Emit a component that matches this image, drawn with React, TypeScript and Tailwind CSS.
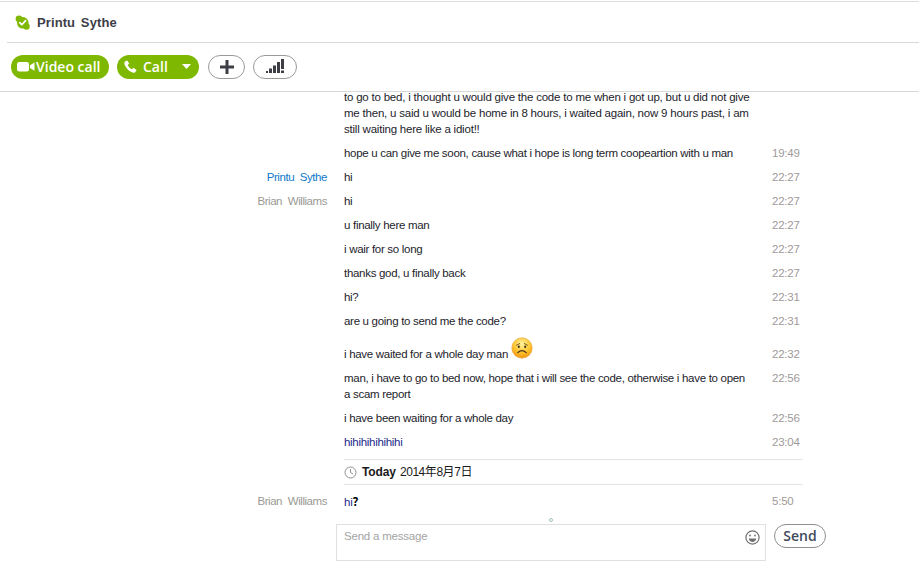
import React from "react";

type Row = { sender?: string; senderBlue?: boolean; lines: React.ReactNode; time?: string };

const rows: Row[] = [
  { lines: <>hope u can give me soon, cause what i hope is long term coopeartion with u man</>, time: "19:49" },
  { sender: "Printu Sythe", senderBlue: true, lines: "hi", time: "22:27" },
  { sender: "Brian Williams", lines: "hi", time: "22:27" },
  { lines: "u finally here man", time: "22:27" },
  { lines: "i wair for so long", time: "22:27" },
  { lines: "thanks god, u finally back", time: "22:27" },
  { lines: "hi?", time: "22:31" },
  { lines: "are u going to send me the code?", time: "22:31" },
];

const rows2: Row[] = [
  { lines: <>man, i have to go to bed now, hope that i will see the code, otherwise i have to open<br />a scam report</>, time: "22:56" },
  { lines: "i have been waiting for a whole day", time: "22:56" },
  { lines: <span className="text-[#1c2a8c]">hihihihihihihi</span>, time: "23:04" },
];

function Msg({ sender, senderBlue, lines, time }: Row) {
  return (
    <div className="flex py-1 leading-4 whitespace-nowrap">
      <div className={`w-[328px] shrink-0 text-right pr-px tracking-[-0.45px] [word-spacing:3px] ${senderBlue ? "text-[#0f78c8]" : "text-[#9a9a94]"}`}>{sender}</div>
      <div className="ml-4 w-[428px] shrink-0 text-[#1d1d2b] tracking-[-0.3px]">{lines}</div>
      <div className="text-[#a09a9a]">{time}</div>
    </div>
  );
}

function SadFace() {
  return (
    <svg width="22" height="22" viewBox="0 0 22 22" className="inline-block ml-[3px] align-[-1px]">
      <defs>
        <radialGradient id="sad" cx="50%" cy="30%" r="75%">
          <stop offset="0%" stopColor="#fff3a0" />
          <stop offset="55%" stopColor="#fdc52e" />
          <stop offset="100%" stopColor="#f28a0c" />
        </radialGradient>
      </defs>
      <circle cx="11" cy="11" r="10.2" fill="url(#sad)" stroke="#e8a23a" strokeWidth="0.6" />
      <path d="M5.500 8.200 L8.600 6.600 M16.500 8.200 L13.400 6.600" stroke="#6b4a1c" strokeWidth="0.9" fill="none" strokeLinecap="round" />
      <ellipse cx="7.800" cy="9.800" rx="1" ry="1.300" fill="#3c2c14" />
      <ellipse cx="14.200" cy="9.800" rx="1" ry="1.300" fill="#3c2c14" />
      <path d="M6.800 15.600 Q11 11.600 15.200 15.600" stroke="#4b3516" strokeWidth="1.300" fill="none" strokeLinecap="round" />
    </svg>
  );
}

export default function App() {
  return (
    <div className="w-[919px] h-[566px] overflow-hidden bg-white text-[11.5px] font-['Liberation_Sans',sans-serif] tracking-[-0.21px] flex flex-col">
      <div className="h-px mt-px bg-[#dcdcdc] shrink-0" />
      <div className="ml-[7px] h-[41px] shrink-0 border-b border-[#d8d8d8] flex items-center pl-2">
        <svg width="15" height="15" viewBox="0 0 15 15">
          <circle cx="7.800" cy="7.800" r="5.800" fill="#7fb800" />
          <circle cx="4" cy="3.800" r="3.400" fill="#7fb800" />
          <circle cx="11.500" cy="11.500" r="3.200" fill="#7fb800" />
          <path d="M4.800 7.600 6.800 9.800 10.600 5.600" stroke="#fff" strokeWidth="1.700" fill="none" strokeLinecap="round" strokeLinejoin="round" />
        </svg>
        <span className="ml-[7px] pt-px text-[13px] font-bold text-[#3d3d48] tracking-[0.1px] [word-spacing:2px]">Printu Sythe</span>
      </div>
      <div className="h-[49px] shrink-0 border-b border-[#d8d8d8] flex items-center pl-[11px] pb-px tracking-normal">
        <div className="w-[98px] h-6 rounded-full bg-[#7fb800] flex items-center pl-[6px] text-white font-['Open_Sans',sans-serif] font-semibold text-[14px] whitespace-nowrap">
          <svg width="18" height="11" viewBox="0 0 18 11" fill="#fff">
            <rect x="0" y="1" width="12" height="9.500" rx="2.200" />
            <path d="M13 4.200 17.500 1.400V9.800L13 7Z" />
          </svg>
          <span className="ml-[1px]">Video call</span>
        </div>
        <div className="ml-2 w-[82px] h-6 rounded-full bg-[#7fb800] flex items-center pl-[7px] text-white font-['Open_Sans',sans-serif] font-semibold text-[14px]">
          <svg width="13" height="13" viewBox="0 0 13 13" fill="#fff">
            <path d="M1 1.600 3.200.4 5.200 3.600 3.800 5C4.400 6.600 6 8.400 8 9.200L9.400 7.800 12.600 10 11.200 12.200C10.400 13 8.800 12.800 7.200 12 4.400 10.600 2 8 .8 5 .2 3.600.2 2.400 1 1.600Z" />
          </svg>
          <span className="ml-[6px]">Call</span>
          <svg width="9" height="5" viewBox="0 0 9 5" fill="#fff" className="ml-[14px]"><path d="M0 0H9L4.500 5Z" /></svg>
        </div>
        <div className="ml-[9px] w-[37px] h-6 rounded-full border border-[#9a9a9a] flex items-center justify-center">
          <svg width="14" height="14" viewBox="0 0 14 14" fill="#3d3d46"><path d="M5.500 0h3v5.500H14v3H8.500V14h-3V8.500H0v-3h5.500Z" /></svg>
        </div>
        <div className="ml-2 w-11 h-6 rounded-full border border-[#9a9a9a] flex items-center justify-center">
          <svg width="19" height="15" viewBox="0 0 19 15" fill="#3d3d46">
            <rect x="0" y="12" width="2" height="2" />
            <rect x="3" y="9.500" width="3" height="4.500" />
            <rect x="7" y="6.500" width="3" height="7.500" />
            <rect x="11" y="3" width="3" height="11" />
            <rect x="15" y="0" width="3" height="10" />
            <rect x="15" y="11.500" width="3" height="2.500" />
          </svg>
        </div>
      </div>

      <div className="flex-1 min-h-0 overflow-hidden flex flex-col">
        <div className="flex leading-4 mt-[-3px] pb-1 whitespace-nowrap">
          <div className="w-[328px] shrink-0" />
          <div className="ml-4 w-[428px] shrink-0 text-[#1d1d2b]">
            to go to bed, i thought u would give the code to me when i got up, but u did not give<br />
            me then, u said u would be home in 8 hours, i waited again, now 9 hours past, i am<br />
            still waiting here like a idiot!!
          </div>
        </div>
        {rows.map((r, i) => <Msg key={i} {...r} />)}
        <div className="flex h-[33px] items-end pb-1 leading-4">
          <div className="w-[328px] shrink-0" />
          <div className="ml-4 w-[428px] shrink-0 text-[#1d1d2b] whitespace-nowrap tracking-[-0.3px]">i have waited for a whole day man<SadFace /></div>
          <div className="text-[#a09a9a]">22:32</div>
        </div>
        {rows2.map((r, i) => <Msg key={i} {...r} />)}
        <div className="ml-[344px] w-[459px] mt-[5px] h-[26px] border-y border-[#e2e2e8] flex items-center text-[12px]">
          <svg width="13" height="13" viewBox="0 0 13 13" fill="none" stroke="#8f8f8f" strokeWidth="1">
            <circle cx="6.500" cy="6.500" r="5.500" />
            <path d="M6.500 3v3.500L9 8" />
          </svg>
          <span className="ml-[5px] font-bold text-[#1a1a1a] tracking-[-0.1px]">Today</span>
          <span className="ml-1 text-[#1a1a1a] tracking-[-0.45px] font-['Liberation_Sans','Noto_Sans_CJK_SC',sans-serif]">2014年8月7日</span>
        </div>
        <div className="flex py-1 leading-4 mt-[4px]">
          <div className="w-[328px] shrink-0 text-right pr-px text-[#9a9a94] tracking-[-0.45px] [word-spacing:3px]">Brian Williams</div>
          <div className="ml-4 w-[428px] shrink-0 text-[#1c2a8c]">hi<span className="font-bold text-black font-['Noto_Sans_CJK_SC',sans-serif]">？</span></div>
          <div className="text-[#a09a9a]">5:50</div>
        </div>
        <div className="ml-[549px] mt-[4px] w-1 h-1 rounded-full border border-[#9cc4c4]" />
        <div className="flex items-start mt-[2px]">
          <div className="ml-[336px] w-[430px] h-[37px] border border-[#e0e0e0] flex justify-between pl-[7px] pt-[3px] pr-[5px] text-[#a4a4a4]">
            <span className="leading-4">Send a message</span>
            <svg width="15" height="15" viewBox="0 0 15 15" className="mt-[2px]" fill="none" stroke="#707070" strokeWidth="1.200">
              <circle cx="7.500" cy="7.500" r="6.600" />
              <circle cx="5" cy="5.500" r="0.900" fill="#707070" stroke="none" />
              <circle cx="10" cy="5.500" r="0.900" fill="#707070" stroke="none" />
              <path d="M3.800 8.500h7.400C11 10.800 9.500 12 7.500 12S4 10.800 3.800 8.500Z" fill="#707070" stroke="none" />
            </svg>
          </div>
          <div className="ml-2 w-[52px] h-6 rounded-full border border-[#8f8f8f] flex items-center justify-center font-['Open_Sans',sans-serif] font-semibold text-[14px] text-[#3f4a5c] tracking-normal pb-px">Send</div>
        </div>
      </div>
    </div>
  );
}
